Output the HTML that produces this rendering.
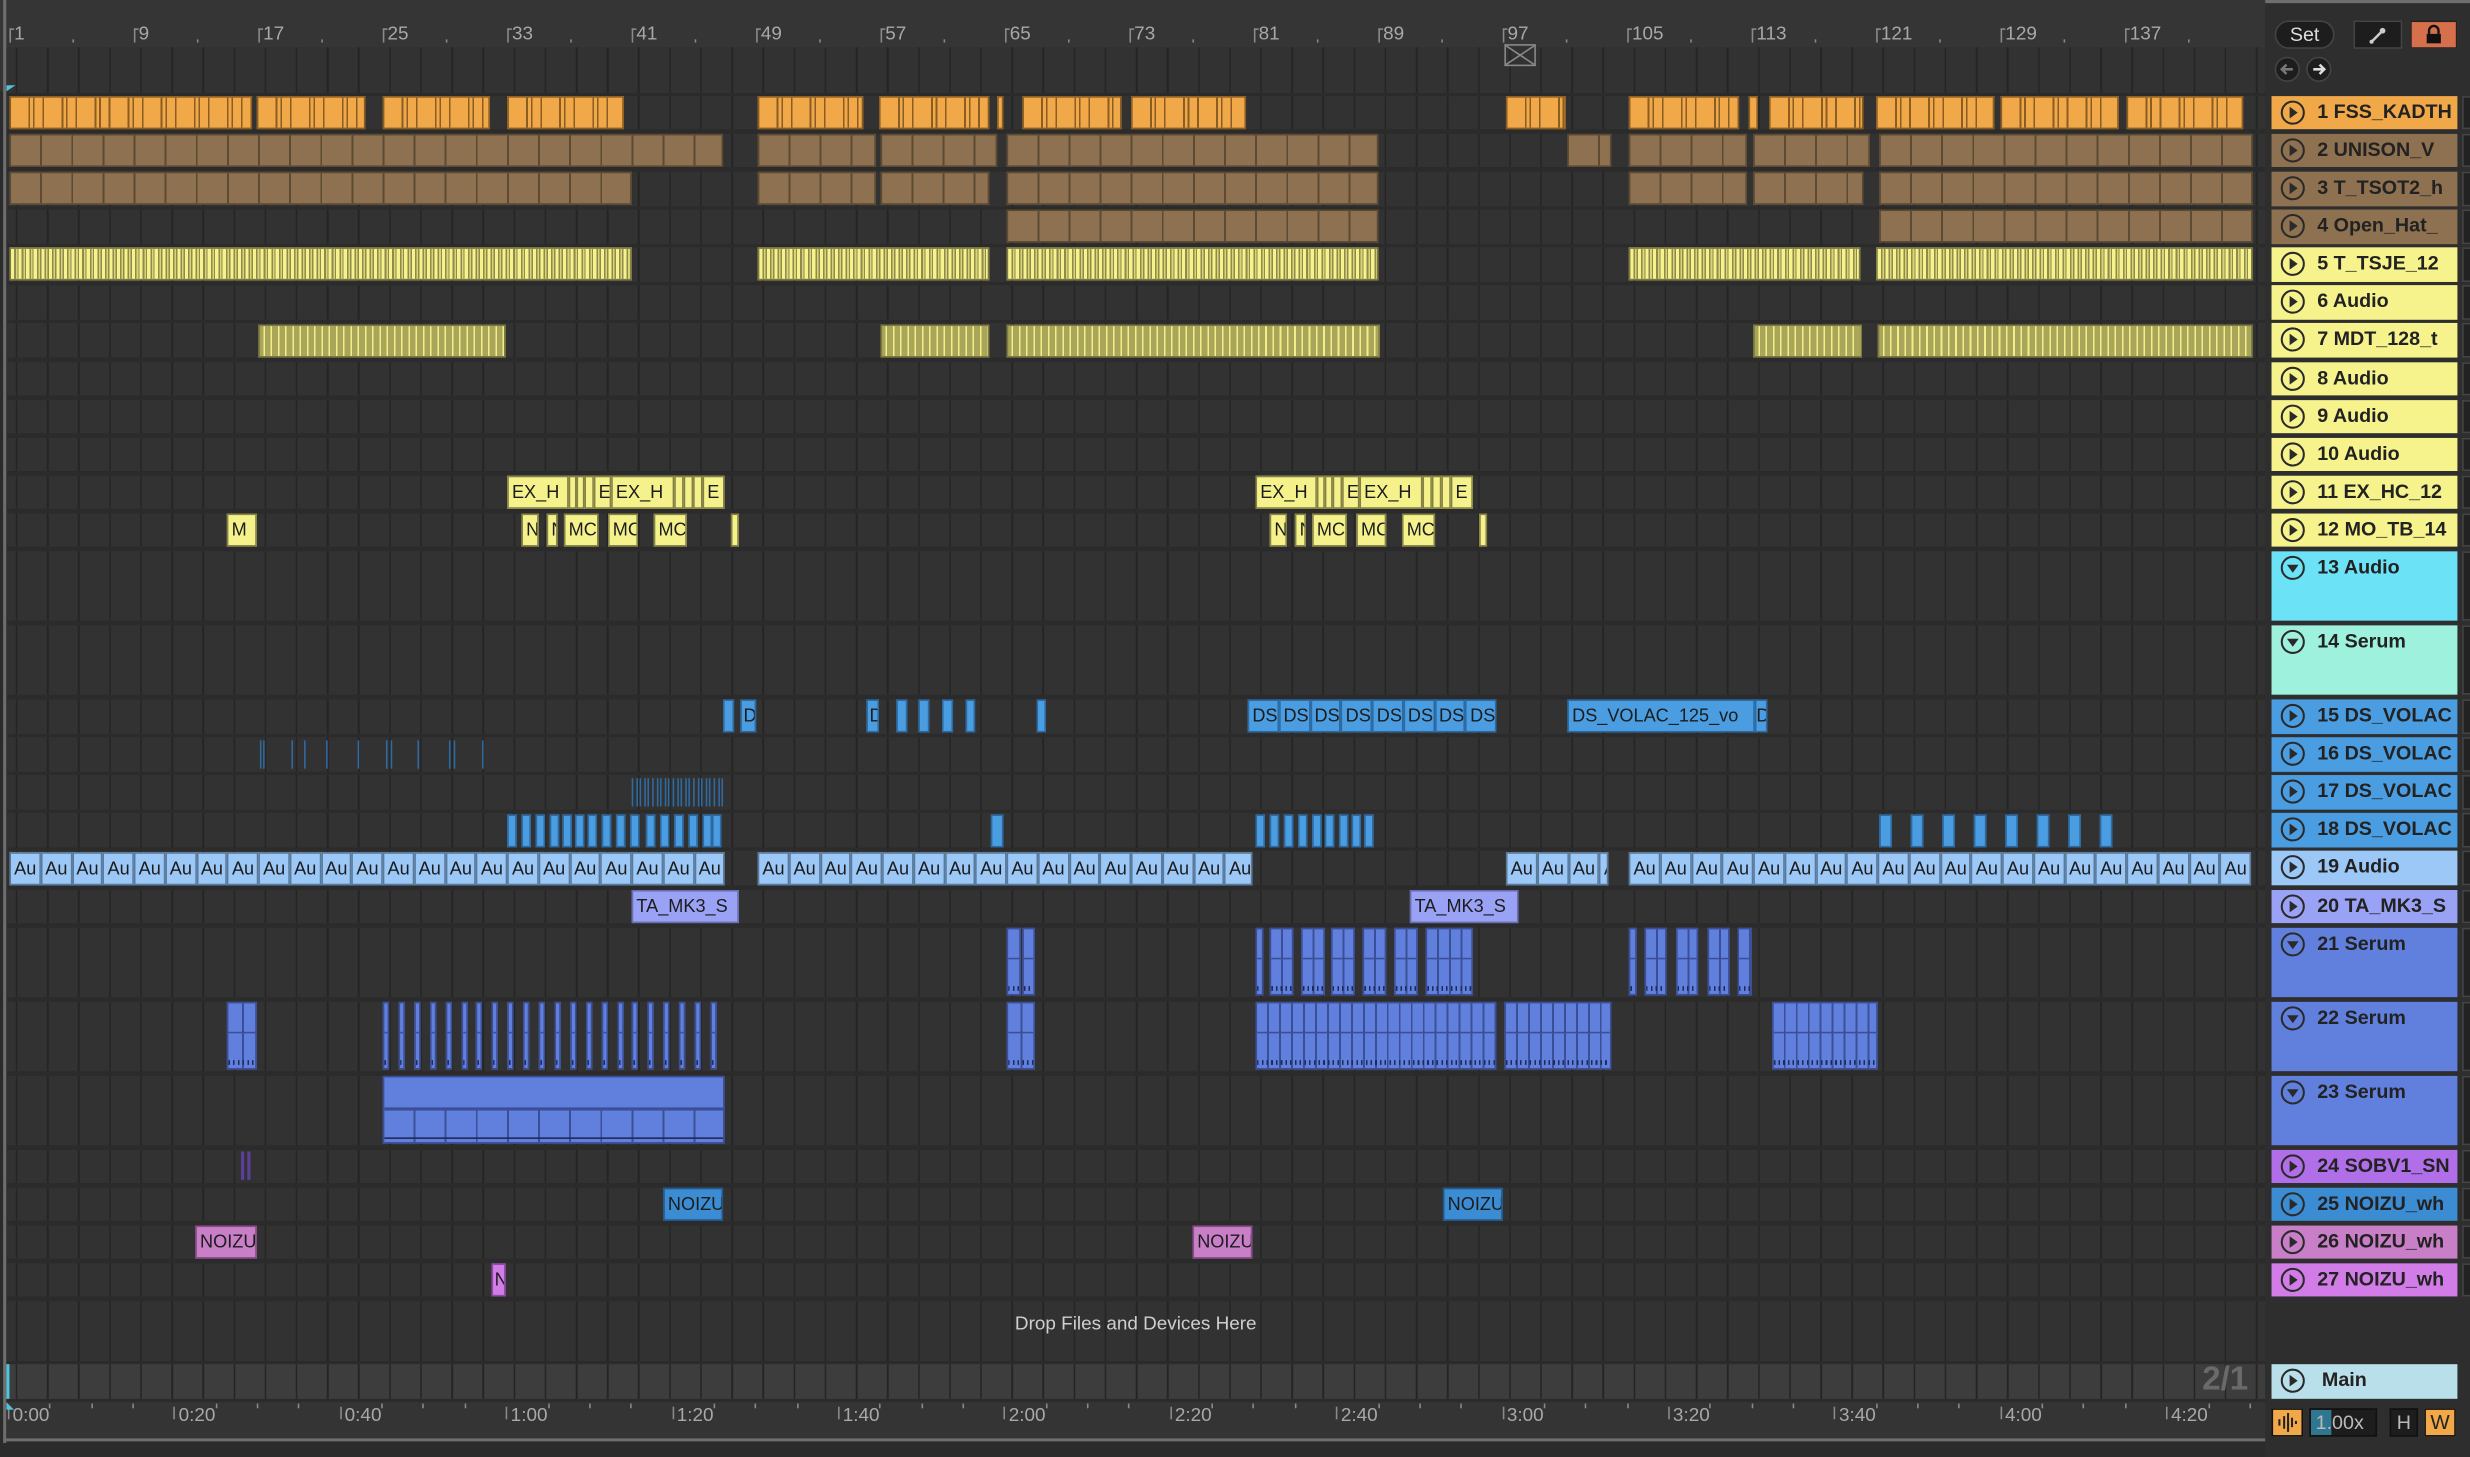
<!DOCTYPE html>
<html><head><meta charset="utf-8">
<style>
html,body{margin:0;padding:0;background:#2a2a2a;width:2470px;height:1456px;overflow:hidden}
#w{position:absolute;left:0;top:0;width:1568px;height:925px;transform:scale(1.57526);transform-origin:0 0;background:#2b2b2b;font-family:"Liberation Sans",sans-serif;overflow:hidden}
.a{position:absolute;box-sizing:border-box}
.lane{background-color:#323232;background-image:repeating-linear-gradient(90deg,#252525 0 1.1px,transparent 1.1px 19.75px);background-position:6px 0}
.c{position:absolute;box-sizing:border-box;overflow:hidden;white-space:nowrap;font-size:11.5px;color:#1c1c1c;line-height:20px;padding-left:2px}
.h{position:absolute;box-sizing:border-box;left:1442px;width:118px;font-size:12.5px;font-weight:bold;color:#222;padding-left:29px;white-space:nowrap;overflow:hidden}
.h svg{position:absolute;left:5px}
.rl{position:absolute;font-size:12px;color:#a8a8a8}
</style></head><body><div id="w"></div>
<script>
const W=document.getElementById('w');
function el(cls,x,y,w,h,style,html){const d=document.createElement('div');d.className=cls;d.style.left=x+'px';d.style.top=y+'px';if(w!=null)d.style.width=w+'px';if(h!=null)d.style.height=h+'px';if(style)d.style.cssText+=style;if(html!=null)d.innerHTML=html;W.appendChild(d);return d;}
// frame
el('a',0,0,1568,2,'background:#6e6e6e');
el('a',0,0,1440,58,'background:#353535');
el('a',2,0,2.2,916,'background:#6e6e6e');
el('a',2,913,1440,2.2,'background:#6e6e6e;border-bottom-left-radius:4px');
// rows
const rows=[];let y=59.5;
for(let i=1;i<=27;i++){const h=[13,14,21,22,23].includes(i)?47:24.1;rows.push({t:y,h:h});y+=h;}
// locator lane
el('a lane',4,30,1434,28.5);
rows.forEach(r=>el('a lane',4,r.t+1.3,1434,r.h-2.6));
el('a lane',4,825.5,1434,38.5);
el('a lane',4,866,1434,21.5,'background-color:#3d3d3d');
el('a',4,866,1.5,21.5,'background:#4fc3dc');
el('a',4,890,1436,23,'background:#343434');
// top ruler
const bars=[1,9,17,25,33,41,49,57,65,73,81,89,97,105,113,121,129,137];
bars.forEach((b,i)=>{const x=6+i*79;el('rl',x+3,14,null,null,'',String(b));el('a',x,18,1,9,'background:#8a8a8a');el('a',x,18,3,1,'background:#8a8a8a');el('a',x+39.5,25,1,2,'background:#8a8a8a');});
el('a',4,54,6,4,'background:#4fc3dc;clip-path:polygon(0 0,100% 0,0 100%)');
el('a',955,28,20,14,'border:1px solid #8a8a8a','<svg width="18" height="12" style="position:absolute;left:0;top:0"><path d="M0 0L18 12M18 0L0 12" stroke="#8a8a8a" stroke-width="1"/></svg>');
// bottom ruler
const tl=['0:00','0:20','0:40','1:00','1:20','1:40','2:00','2:20','2:40','3:00','3:20','3:40','4:00','4:20'];
tl.forEach((t,i)=>{const x=5+i*105.4;el('rl',x+3,891,null,null,'',t);el('a',x,893,1,8,'background:#8a8a8a');for(let k=1;k<4;k++)el('a',x+k*26.3,891,1,3,'background:#8a8a8a');});
el('a',4,890,5,5,'background:#4fc3dc;clip-path:polygon(0 0,0 100%,100% 100%)');
el('a',1398,863,40,26,'font-size:21px;font-weight:bold;color:#6a6a6a;line-height:26px','2/1');
el('a',4,833,1434,20,'text-align:center;font-size:12px;color:#cfcfcf','Drop Files and Devices Here');
// clips
function R(i){return rows[i-1];}
function clip(i,x1,x2,bg,bd,opt){opt=opt||{};const r=R(i);const d=el('c',x1,r.t+1.5,x2-x1,r.h-3,'background:'+bg+';border:1px solid '+bd+';'+(opt.st||''),opt.t||'');if(opt.lh)d.style.lineHeight=opt.lh;return d;}
function seg(p,c){return 'background-image:repeating-linear-gradient(90deg,transparent 0 '+(p-1.2)+'px,'+c+' '+(p-1.2)+'px '+p+'px);';}
const OR='#f0a848',ORd='#8a5d22',BR='#8d7150',BRd='#5c4a32';
[[6,160],[163,232],[243,311],[322,396],[481,548],[558,628],[633,637],[649,712],[718,791],[956,994],[1034,1104],[1110,1116],[1123,1183],[1191,1266],[1270,1345],[1350,1424]].forEach(a=>clip(1,a[0],a[1],OR,ORd,{st:seg(9.875,ORd)+'background-image:repeating-linear-gradient(90deg,transparent 0 11px,'+ORd+' 11px 12.2px,transparent 12.2px 14px,'+ORd+' 14px 15px,transparent 15px 20px,'+ORd+' 20px 21px)'}));
[[6,459],[481,556],[559,633],[639,875],[995,1023],[1034,1109],[1113,1187],[1193,1430]].forEach(a=>clip(2,a[0],a[1],BR,BRd,{st:seg(19.75,BRd)}));
[[6,401],[481,556],[559,628],[639,875],[1034,1109],[1113,1183],[1193,1430]].forEach(a=>clip(3,a[0],a[1],BR,BRd,{st:seg(19.75,BRd)}));
[[639,875],[1193,1430]].forEach(a=>clip(4,a[0],a[1],BR,BRd,{st:seg(19.75,BRd)}));
[[6,401],[481,628],[639,875],[1034,1181],[1191,1430]].forEach(a=>clip(5,a[0],a[1],'#f3ef88','#7c7a40',{st:'background-image:repeating-linear-gradient(90deg,#f6f28c 0 2px,#8e8b4c 2px 3px,#d8d47a 3px 4px,#8e8b4c 4px 4.8px)'}));
[[164,321],[559,628],[639,876],[1113,1182],[1192,1430]].forEach(a=>clip(7,a[0],a[1],'#a9a55a','#7c7a40',{st:'background-image:repeating-linear-gradient(90deg,#a9a55a 0 2.2px,#f3ef88 2.2px 3.2px,#a9a55a 3.2px 4.6px)'}));
const Y='#f5f28b',Yd='#858245';
[[322,0],[797,475]].forEach(o=>{const d=o[1]?o[0]-322:0;
 clip(11,322+d,361+d,Y,Yd,{t:'EX_H'});[[361,366],[366,371],[371,377],[377,388]].forEach((a,k)=>clip(11,a[0]+d,a[1]+d,Y,Yd,{t:k==3?'E':''}));
 clip(11,388+d,428+d,Y,Yd,{t:'EX_H'});[[428,434],[434,440],[440,446],[446,460]].forEach((a,k)=>clip(11,a[0]+d,a[1]+d,Y,Yd,{t:k==3?'E':''}));
 [[331,342,'N'],[347,354,'N'],[358,380,'MC'],[386,405,'MC'],[415,436,'MC'],[464,469,'']].forEach(a=>clip(12,a[0]+d,a[1]+d,Y,Yd,{t:a[2]}));});
clip(12,144,163,Y,Yd,{t:'M'});
const B='#4a9de0',Bd='#2d6aa2';
[[459,466,''],[470,480,'D'],[550,558,'D'],[569,576,''],[583,590,''],[598,605,''],[613,619,''],[658,664,'']].forEach(a=>clip(15,a[0],a[1],B,Bd,{t:a[2],st:'padding-left:1px'}));
for(let k=0;k<8;k++)clip(15,792+k*19.75,792+(k+1)*19.75,B,Bd,{t:'DS'});
clip(15,995,1114,B,Bd,{t:'DS_VOLAC_125_vo'});clip(15,1114,1122,B,Bd,{t:'D',st:'padding-left:0'});
[165,167,185,193,207,227,245,248,265,285,288,306].forEach(x=>el('a',x,R(16).t+3,1.2,R(16).h-6,'background:#2f6aa0'));
for(let x=401;x<459;x+=2.6)el('a',x,R(17).t+3,1,R(17).h-6,'background:#2f6aa0');
[322,331,340,349,357,365,373,382,391,400,410,419,428,437,446,452].forEach(x=>clip(18,x,x+6,B,Bd));
clip(18,629,637,B,Bd);
[797,806,815,824,833,841,850,858,866].forEach(x=>clip(18,x,x+6,B,Bd));
[1193,1213,1233,1253,1273,1293,1313,1333].forEach(x=>clip(18,x,x+8,B,Bd));
const LB='#9cc8f7',LBd='#5a7a9c';
function au(x1,x2){for(let x=x1;x<x2-2;x+=19.75){clip(19,x,Math.min(x+19.75,x2),LB,LBd,{t:'Au'});}}
au(6,460);au(481,795);au(956,1021);au(1034,1430);
clip(20,401,469,'#9aa2f6','#6a6fb4',{t:'TA_MK3_S'});clip(20,895,964,'#9aa2f6','#6a6fb4',{t:'TA_MK3_S'});
const S='#6180de',Sd='#3b4f96';
function ser(i,x1,x2,p){const r=R(i);const d=el('c',x1,r.t+2,x2-x1,r.h-4,'background:'+S+';border:1px solid '+Sd+';'+(p?seg(p,Sd):'')+'background-color:'+S);el('a',0,(r.h-4)*0.44,x2-x1,1,'background:'+Sd).remove();d.innerHTML='<div style="position:absolute;left:0;right:0;top:44%;height:1px;background:'+Sd+'"></div><div style="position:absolute;left:0;right:0;bottom:2px;height:3px;background-image:repeating-linear-gradient(90deg,#1c2a55 0 1px,transparent 1px 3px)"></div>';}
ser(21,639,648,0);ser(21,649,657,0);
[[797,802],[806,821],[826,841],[845,860],[865,880],[885,900],[905,935]].forEach(a=>ser(21,a[0],a[1],7.5));
[[1034,1039],[1044,1058],[1064,1078],[1084,1098],[1103,1112]].forEach(a=>ser(21,a[0],a[1],7.5));
ser(22,144,163,9.875);
for(let x=243;x<456;x+=9.9){ser(22,x,x+4,0);}
ser(22,639,657,9);ser(22,797,950,7.6);ser(22,955,1023,7.6);ser(22,1125,1192,7.6);
(function(){const r=R(23);const d=el('c',243,r.t+2,217,r.h-4,'background:'+S+';border:1px solid '+Sd);d.innerHTML='<div style="position:absolute;left:0;right:0;top:46%;height:2px;background:'+Sd+'"></div><div style="position:absolute;left:0;right:0;top:48%;bottom:0;'+seg(19.75,Sd)+'"></div><div style="position:absolute;left:0;right:0;bottom:2px;height:1.5px;background:#1c2a55"></div>';})();
el('a',153,R(24).t+3,2,R(24).h-6,'background:#5b3f9a');el('a',157,R(24).t+3,2,R(24).h-6,'background:#5b3f9a');
clip(25,421,459,'#3b8cd2','#23588a',{t:'NOIZU'});clip(25,916,954,'#3b8cd2','#23588a',{t:'NOIZU'});
clip(26,124,163,'#c87fc8','#8a4c8a',{t:'NOIZU'});clip(26,757,795,'#c87fc8','#8a4c8a',{t:'NOIZU'});
clip(27,312,321,'#d27ce8','#8c4aa0',{t:'N',st:'padding-left:1px'});
// right panel
el('a',1438,0,130,925,'background:#2e2e2e');
el('a',1438,0,130,2,'background:#6e6e6e');
const play='<svg width="17" height="17" viewBox="0 0 17 17"><circle cx="8.5" cy="8.5" r="7" fill="none" stroke="#2a2a2a" stroke-width="1.3"/><path d="M6.5 4.8L11.6 8.5L6.5 12.2Z" fill="#2a2a2a"/></svg>';
const playD='<svg width="17" height="17" viewBox="0 0 17 17"><circle cx="8.5" cy="8.5" r="7" fill="none" stroke="#2a2a2a" stroke-width="1.3"/><path d="M4.8 6.5L8.5 11.6L12.2 6.5Z" fill="#2a2a2a"/></svg>';
const hd=[['1 FSS_KADTH',OR],['2 UNISON_V',BR],['3 T_TSOT2_h',BR],['4 Open_Hat_',BR],['5 T_TSJE_12','#f6f38c'],['6 Audio','#f6f38c'],['7 MDT_128_t','#f6f38c'],['8 Audio','#f6f38c'],['9 Audio','#f6f38c'],['10 Audio','#f6f38c'],['11 EX_HC_12','#f6f38c'],['12 MO_TB_14','#f6f38c'],['13 Audio','#6ce2f6'],['14 Serum','#9ef1dd'],['15 DS_VOLAC',B],['16 DS_VOLAC',B],['17 DS_VOLAC',B],['18 DS_VOLAC',B],['19 Audio','#9cc8f7'],['20 TA_MK3_S','#9aa2f6'],['21 Serum',S],['22 Serum',S],['23 Serum',S],['24 SOBV1_SN','#b06ee8'],['25 NOIZU_wh','#3b8cd2'],['26 NOIZU_wh','#c87fc8'],['27 NOIZU_wh','#d27ce8']];
hd.forEach((a,i)=>{const r=rows[i];const tall=r.h>30;const d=el('h',null,r.t+1.3,null,r.h-2.6,'background:'+a[1]+';line-height:20px',(tall?playD:play).replace('<svg','<svg style="position:absolute;left:5px;top:2px"')+a[0]);el('a',1563,r.t+1.3,5,r.h-2.6,'background:#222;border:1px solid #444;border-right:none');});
el('h',null,866,null,21.5,'background:#b9dfea;line-height:21px;padding-left:32px',play.replace('<svg','<svg style="position:absolute;left:5px;top:2px"')+'Main');
// top right controls
el('a',1444,13,38,18,'background:#1d1d1d;border:1px solid #444;border-radius:9px;color:#ddd;font-size:12.5px;text-align:center;line-height:16px','Set');
el('a',1494,13,31,18,'background:#1d1d1d;border:1px solid #444','<svg width="29" height="16"><path d="M11 12L17 6" stroke="#ccc" stroke-width="1.6"/><circle cx="17.5" cy="5.5" r="1.8" fill="#ccc"/><circle cx="10.5" cy="12.5" r="1.3" fill="#ccc"/></svg>');
el('a',1530,13,30,18,'background:#d66f4c;border:1px solid #222','<svg width="28" height="16"><path d="M11 7.5V5.5a3 3 0 0 1 6 0V7.5" fill="none" stroke="#111" stroke-width="1.5"/><rect x="9.5" y="7.5" width="9" height="6" fill="#111"/></svg>');
el('a',1444,36,16,16,'background:#1d1d1d;border:1px solid #444;border-radius:50%','<svg width="14" height="14"><path d="M10.5 7H3.5M6.5 4L3.5 7L6.5 10" fill="none" stroke="#777" stroke-width="1.6"/></svg>');
el('a',1464,36,16,16,'background:#1d1d1d;border:1px solid #444;border-radius:50%','<svg width="14" height="14"><path d="M3.5 7H10.5M7.5 4L10.5 7L7.5 10" fill="none" stroke="#ddd" stroke-width="1.6"/></svg>');
// bottom right controls
el('a',1442,894,20,18,'background:#f0a848;border:1px solid #111','<svg width="18" height="16"><path d="M4 6v4M7 4v8M9.5 2v12M12 5v6M14.5 7v2" stroke="#222" stroke-width="1.3"/></svg>');
el('a',1466,894,43,18,'background:#1d1d1d;border:1px solid #111;color:#bbb;font-size:12.5px;line-height:16px;overflow:hidden','<div style="position:absolute;left:0;top:0;width:13px;height:16px;background:#2f7690"></div><span style="position:relative;left:3px">1.00x</span>');
el('a',1517,894,18,18,'background:#1d1d1d;border:1px solid #111;color:#bbb;font-size:12.5px;line-height:16px;text-align:center','H');
el('a',1539,894,20,18,'background:#f0a848;border:1px solid #111;color:#222;font-size:13px;line-height:16px;text-align:center','W');
</script></body></html>
